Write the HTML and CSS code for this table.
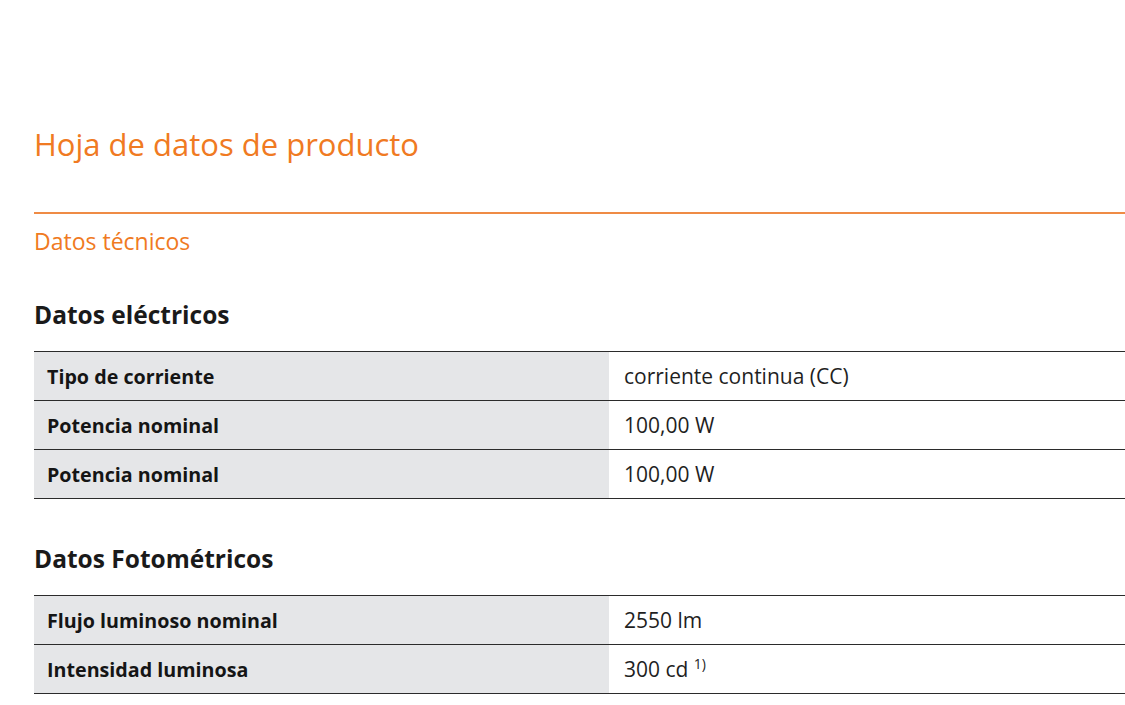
FILE: index.html
```html
<!DOCTYPE html>
<html lang="es">
<head>
<meta charset="utf-8">
<title>Hoja de datos de producto</title>
<link rel="stylesheet" href="styles.css">
</head>
<body>
<main class="page">
  <h1 class="title">Hoja de datos de producto</h1>
  <div class="rule"></div>
  <h2 class="subtitle">Datos técnicos</h2>

  <section class="group">
    <h3 class="group-title">Datos eléctricos</h3>
    <table class="specs">
      <tr><th>Tipo de corriente</th><td>corriente continua (CC)</td></tr>
      <tr><th>Potencia nominal</th><td>100,00 W</td></tr>
      <tr><th>Potencia nominal</th><td>100,00 W</td></tr>
    </table>
  </section>

  <section class="group">
    <h3 class="group-title">Datos Fotométricos</h3>
    <table class="specs">
      <tr><th>Flujo luminoso nominal</th><td>2550 lm</td></tr>
      <tr><th>Intensidad luminosa</th><td>300 cd <sup>1)</sup></td></tr>
    </table>
  </section>
</main>
</body>
</html>
```

FILE: styles.css
```css
html, body {
  margin: 0;
  padding: 0;
  background: #ffffff;
}

body {
  font-family: "Open Sans", "Noto Sans", sans-serif;
  color: #1a1a1a;
  overflow: hidden;
}

.page {
  padding: 123px 0 0 34px;
  display: flex;
  flex-direction: column;
}

.title {
  margin: 0;
  font-size: 31px;
  font-weight: 400;
  line-height: 42px;
  color: #f07a22;
}

.rule {
  margin-top: 47px;
  height: 2px;
  background: #ef8b45;
}

.subtitle {
  margin: 12px 0 0;
  font-size: 23px;
  font-weight: 400;
  line-height: 30px;
  color: #f07a22;
}

.group {
  display: flex;
  flex-direction: column;
}

.group-title {
  margin: 0;
  font-size: 24.5px;
  font-weight: 700;
  line-height: 32px;
  color: #1a1a1a;
}

.group:first-of-type .group-title {
  margin-top: 43px;
}

.group + .group .group-title {
  margin-top: 44px;
}

.specs {
  margin-top: 20px;
  width: 100%;
  border-collapse: collapse;
}

.specs tr {
  height: 49px;
  border-top: 1.5px solid #2b2b2b;
  border-bottom: 1.5px solid #2b2b2b;
}

.specs th {
  width: 575px;
  padding: 0 0 0 13px;
  box-sizing: border-box;
  background: #e5e6e8;
  text-align: left;
  font-size: 19.7px;
  font-weight: 700;
  color: #151515;
}

.specs td {
  padding: 0 0 0 15px;
  background: #ffffff;
  font-size: 21px;
  color: #1f1f1f;
}

.specs sup {
  font-size: 14px;
  vertical-align: 8px;
  line-height: 0;
}
```
